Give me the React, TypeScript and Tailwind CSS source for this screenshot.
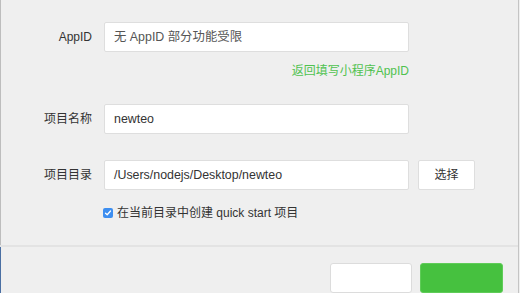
import React from "react";

const font = { fontFamily: '"Liberation Sans", "Noto Sans CJK SC", sans-serif' };

function Label({ children }: { children: React.ReactNode }) {
  return (
    <div className="w-[91px] shrink-0 text-right pt-[7px] text-[12px] leading-[16px] text-[#333]">
      {children}
    </div>
  );
}

function Input({ value, muted }: { value: string; muted?: boolean }) {
  return (
    <div
      className={`ml-[12px] w-[305px] h-[30px] bg-white border border-[#dedede] rounded-[2px] flex items-center pl-[9px] text-[12.4px] ${
        muted ? "text-[#555]" : "text-[#333]"
      }`}
    >
      {value}
    </div>
  );
}

export default function App() {
  return (
    <div style={font} className="w-[520px] h-[293px] bg-[#efefef] overflow-hidden">
      <div className="w-[519px] h-[293px] border-r border-[#c4c4c4] flex flex-col">
        <div className="h-[267px] border-l border-[#bdbdbd] flex flex-col pt-[22px]">
          <div className="flex">
            <Label>AppID</Label>
            <Input value="无 AppID 部分功能受限" muted />
          </div>
          <div className="w-[408px] text-right mt-[11px] text-[12px] leading-[16px] text-[#4fc24f]">
            返回填写小程序AppID
          </div>
          <div className="flex mt-[25px]">
            <Label>项目名称</Label>
            <Input value="newteo" />
          </div>
          <div className="flex mt-[26px]">
            <Label>项目目录</Label>
            <Input value="/Users/nodejs/Desktop/newteo" />
            <div className="ml-[9px] w-[57px] h-[30px] bg-white border border-[#dedede] rounded-[2px] flex items-center justify-center text-[12px] text-[#333]">
              选择
            </div>
          </div>
          <div className="flex items-center ml-[102px] mt-[15px]">
            <div className="w-[10px] h-[10px] rounded-[2px] bg-[#3d8ef0] flex items-center justify-center">
              <svg width="8" height="8" viewBox="0 0 8 8">
                <path d="M1.5 4.2 L3.2 5.8 L6.5 2" stroke="white" strokeWidth="1.3" fill="none" strokeLinecap="round" strokeLinejoin="round" />
              </svg>
            </div>
            <span className="ml-[4px] text-[12px] leading-[16px] text-[#333]">在当前目录中创建 quick start 项目</span>
          </div>
        </div>
        <div className="h-[2px] bg-[#e3e3e3]" />
        <div className="flex-1 border-l border-[#4a6fa3] flex pt-[16px]">
          <div className="ml-[329px] w-[82px] h-[30px] bg-white border border-[#dcdcdc] rounded-[3px]" />
          <div className="ml-[8px] w-[83px] h-[30px] bg-[#46c13f] border border-[#5fcc58] rounded-[3px]" />
        </div>
      </div>
    </div>
  );
}
